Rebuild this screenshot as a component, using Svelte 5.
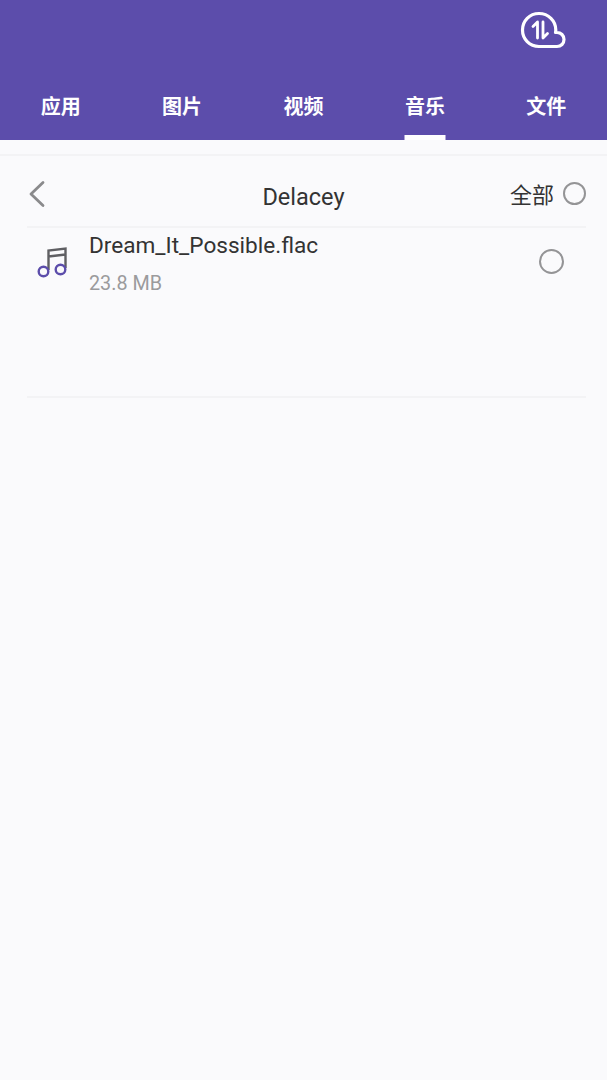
<script>
  const tabs = ["应用", "图片", "视频", "音乐", "文件"];
  let active = 3;
</script>

<div class="page">
  <header>
    <div class="topbar">
      <svg class="cloud" width="46" height="38" viewBox="0 0 46 38" fill="none" stroke="#fff" stroke-linecap="round" stroke-linejoin="round">
        <path stroke-width="3.2" d="M19 2.500C9.500 2.500 2.500 10 2.500 19S9.500 35.500 19 35.500H37C41 35.500 44 32.500 44 28.500C44 24.500 41 21.500 37 21.500H35.500C35.700 20.500 35.800 20 35.800 19C35.800 10 28.500 2.500 19 2.500Z" />
        <path stroke-width="2.800" d="M17.500 27V11L13 15.500M23 11V27L27.500 22.500" />
      </svg>
    </div>
    <nav>
      {#each tabs as tab, i}
        <div class="tab" class:active={i === active}>{tab}</div>
      {/each}
    </nav>
  </header>

  <main>
    <div class="title-row">
      <svg class="back" width="18" height="28" viewBox="0 0 18 28" fill="none" stroke="#8a8a8c" stroke-width="2.800" stroke-linecap="round" stroke-linejoin="round">
        <path d="M15 2.500L3 14L15 25.500" />
      </svg>
      <span class="title">Delacey</span>
      <div class="all">
        <span>全部</span>
        <i class="radio small"></i>
      </div>
    </div>

    <div class="item">
      <svg class="note" width="32" height="32" viewBox="0 0 32 32" fill="none">
        <path stroke="#5f5f63" stroke-width="2.400" d="M11.500 24V4.500L28.500 2.500V22M11.500 10.500L28.500 8.500" />
        <circle stroke="#5c4dab" stroke-width="2.400" cx="6.500" cy="25.500" r="4.800" />
        <circle stroke="#5c4dab" stroke-width="2.400" cx="23.500" cy="23.500" r="4.800" />
      </svg>
      <div class="meta">
        <div class="name">Dream_It_Possible.flac</div>
        <div class="size">23.8 MB</div>
      </div>
      <i class="radio"></i>
    </div>
  </main>
</div>

<style>
  :global(body) {
    background: #fafafc;
  }
  .page {
    min-height: 1080px;
    background: #fafafc;
    font-family: Roboto, "Noto Sans CJK SC", sans-serif;
  }
  header {
    height: 140px;
    background: #5c4dab;
    display: flex;
    flex-direction: column;
  }
  .topbar {
    height: 86px;
    display: flex;
    justify-content: flex-end;
    align-items: flex-start;
    padding: 11px 41px 0 0;
    box-sizing: border-box;
  }
  nav {
    display: grid;
    grid-template-columns: repeat(5, 1fr);
    flex: 1;
  }
  .tab {
    font-family: "Noto Sans CJK SC", sans-serif;
    font-size: 20px;
    font-weight: 700;
    line-height: 30px;
    padding-top: 5px;
    color: #fff;
    text-align: center;
    position: relative;
  }
  .tab.active::after {
    content: "";
    position: absolute;
    left: 50%;
    bottom: 0;
    width: 41px;
    height: 5px;
    transform: translateX(-50%);
    background: #fff;
  }
  main {
    margin-top: 14px;
    border-top: 2px solid #f3f3f5;
  }
  .title-row {
    height: 70px;
    margin: 0 21px 0 27px;
    display: flex;
    align-items: center;
    justify-content: space-between;
    position: relative;
    border-bottom: 2px solid #f3f3f5;
  }
  .back {
    margin: 6px 0 0 1px;
  }
  .title {
    position: absolute;
    left: 0;
    right: 6px;
    top: 26px;
    text-align: center;
    font-size: 23.5px;
    line-height: 30px;
    color: #333;
  }
  .all {
    display: flex;
    align-items: center;
    gap: 9px;
    font-family: "Noto Sans CJK SC", sans-serif;
    font-size: 22px;
    color: #333;
    position: relative;
    margin-top: 4px;
  }
  .radio {
    display: block;
    box-sizing: border-box;
    width: 25px;
    height: 25px;
    border: 2px solid #949496;
    border-radius: 50%;
    flex: none;
  }
  .radio.small {
    width: 23px;
    height: 23px;
  }
  .item {
    height: 168px;
    margin: 0 21px 0 27px;
    display: flex;
    align-items: flex-start;
    border-bottom: 2px solid #f3f3f5;
  }
  .note {
    margin: 18px 0 0 10px;
    flex: none;
  }
  .meta {
    margin-left: 20px;
    flex: 1;
  }
  .name {
    font-size: 22.6px;
    line-height: 34px;
    margin-top: 1px;
    color: #333;
  }
  .size {
    font-size: 19.8px;
    line-height: 26px;
    margin-top: 8px;
    color: #9b9b9d;
  }
  .item .radio {
    margin: 21px 22px 0 0;
  }
</style>
